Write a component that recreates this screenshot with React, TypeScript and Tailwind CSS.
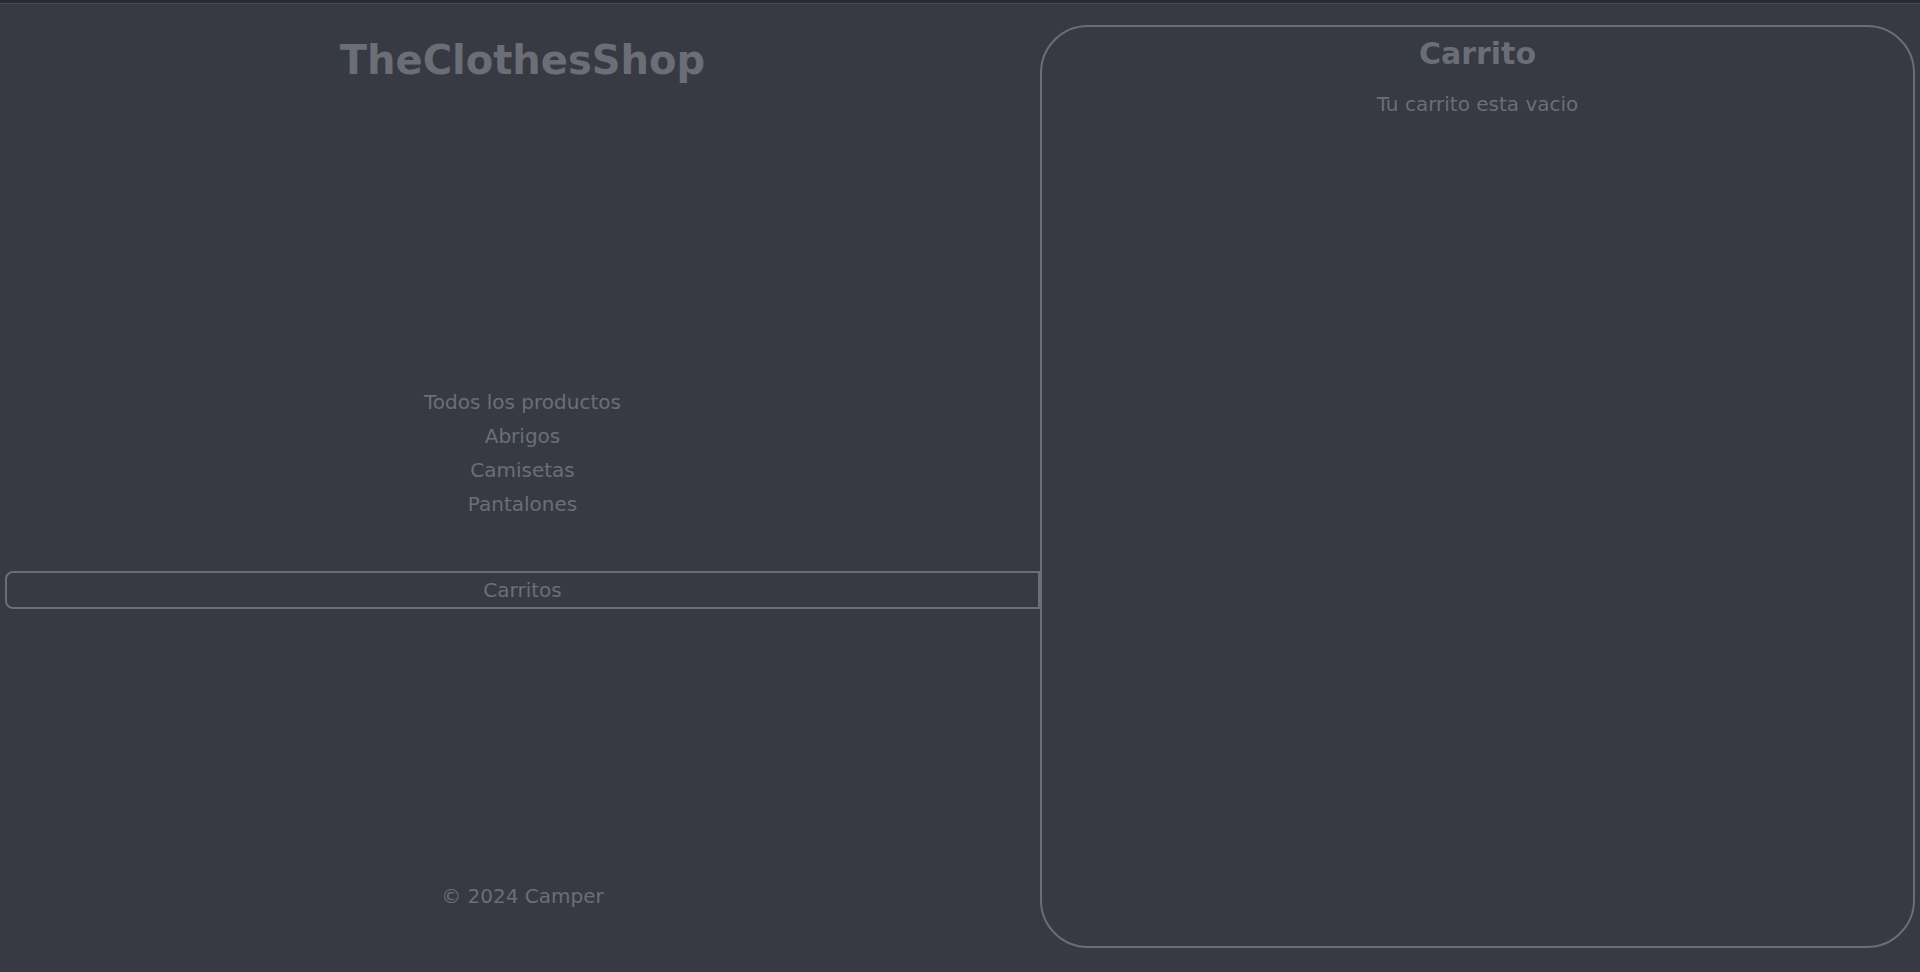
const categorias = ["Todos los productos", "Abrigos", "Camisetas", "Pantalones"];

function Carrito() {
    return (
        <aside className="w-[875px] h-[923px] mt-[21px] rounded-[48px] border-2 border-[#6b6e76] flex flex-col items-center pt-[9px]">
            <h2 className="text-3xl leading-9 font-bold">Carrito</h2>
            <p className="mt-[18px] text-xl leading-7">Tu carrito esta vacio</p>
        </aside>
    )
}

function App() {
    return (
        <div className="min-h-screen bg-[#373a42] text-[#6b6e76] font-['DejaVu_Sans',sans-serif]">
            <div className="h-[4px] bg-[#2b2a33] border-b border-[#4a4a55]"></div>
            <div className="flex h-[968px]">
                <div className="w-[1040px] flex flex-col items-center pl-[5px]">
                    <h1 className="mt-[32px] text-[40px] leading-[48px] font-bold">TheClothesShop</h1>
                    <nav className="mt-[304px] flex flex-col items-center gap-[6px] text-xl leading-7">
                        {categorias.map((cat) => (
                            <a key={cat} href="#" className="hover:underline">{cat}</a>
                        ))}
                    </nav>
                    <button className="mt-[53px] w-full h-[38px] border-2 border-[#6b6e76] rounded-l-lg text-xl leading-7">
                        Carritos
                    </button>
                    <footer className="mt-[273px] text-xl leading-7">© 2024 Camper</footer>
                </div>
                <Carrito />
            </div>
        </div>
    )
}

export default App
